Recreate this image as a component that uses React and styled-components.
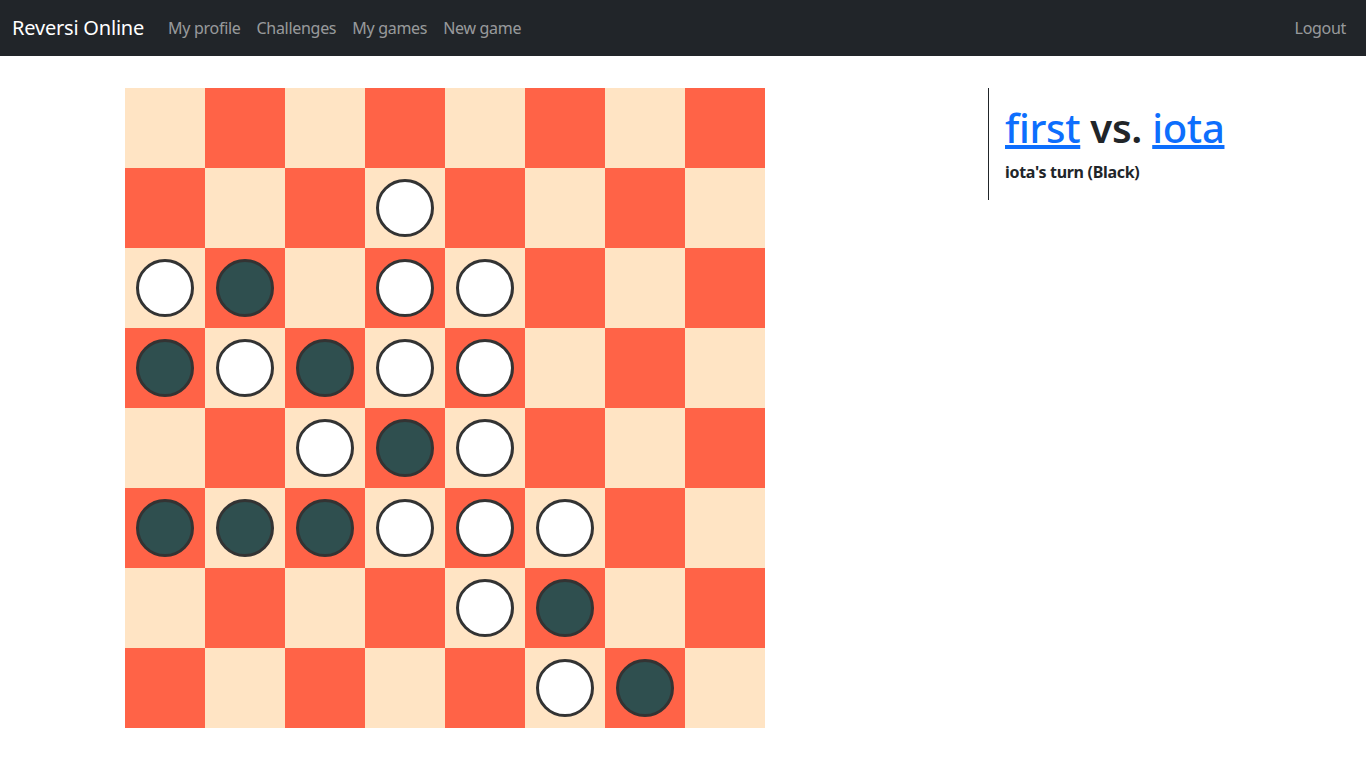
import React from "react";
import styled, { createGlobalStyle } from "styled-components";

const GlobalStyle = createGlobalStyle`
  html, body { margin: 0; padding: 0; background: #fff; }
  body {
    font-family: "Noto Sans", "Open Sans", sans-serif;
    font-size: 16px;
    line-height: 1.5;
    color: #212529;
  }
  * { box-sizing: border-box; }
`;

const Navbar = styled.nav`
  height: 56px;
  background: #212529;
  display: flex;
  align-items: center;
  padding: 0 12px;
`;

const Brand = styled.a`
  color: #fff;
  font-size: 20px;
  text-decoration: none;
  margin-right: 16px;
  letter-spacing: -0.2px;
`;

const NavList = styled.div`
  display: flex;
  align-items: center;
  flex: 1;
`;

const NavLink = styled.a`
  color: rgba(255, 255, 255, 0.55);
  text-decoration: none;
  padding: 8px;
  font-size: 16px;
  letter-spacing: -0.3px;
  margin-left: ${(p) => (p.$push ? "auto" : "0")};
`;

const Main = styled.main`
  display: flex;
  align-items: flex-start;
  padding: 32px 0 0 125px;
  gap: 223px;
`;

const Board = styled.div`
  display: grid;
  grid-template-columns: repeat(8, 80px);
  grid-template-rows: repeat(8, 80px);
`;

const Cell = styled.div`
  background: ${(p) => (p.$light ? "#ffe4c4" : "#ff6347")};
  display: flex;
  align-items: center;
  justify-content: center;
`;

const Piece = styled.div`
  width: 58px;
  height: 58px;
  border-radius: 50%;
  border: 3.5px solid #333;
  background: ${(p) => (p.$color === "b" ? "#2f4f4f" : "#fff")};
`;

const Panel = styled.aside`
  border-left: 1px solid #212529;
  padding: 16px 16px;
`;

const Title = styled.h1`
  margin: 0 0 8px;
  font-size: 40px;
  line-height: 48px;
  font-weight: 600;
  letter-spacing: -0.3px;
`;

const PlayerLink = styled.a`
  color: #0d6efd;
  text-decoration: underline;
  font-weight: 500;
`;

const Turn = styled.div`
  font-weight: 700;
  font-size: 16px;
  line-height: 24px;
  letter-spacing: -0.3px;
`;

const BOARD = [
  "........",
  "...w....",
  "wb.ww...",
  "bwbww...",
  "..wbw...",
  "bbbwww..",
  "....wb..",
  ".....wb.",
];

export default function App() {
  return (
    <>
      <GlobalStyle />
      <Navbar>
        <Brand href="#">Reversi Online</Brand>
        <NavList>
          <NavLink href="#">My profile</NavLink>
          <NavLink href="#">Challenges</NavLink>
          <NavLink href="#">My games</NavLink>
          <NavLink href="#">New game</NavLink>
          <NavLink href="#" $push>Logout</NavLink>
        </NavList>
      </Navbar>
      <Main>
        <Board>
          {BOARD.map((row, r) =>
            row.split("").map((ch, c) => (
              <Cell key={`${r}-${c}`} $light={(r + c) % 2 === 0}>
                {ch !== "." && <Piece $color={ch} />}
              </Cell>
            ))
          )}
        </Board>
        <Panel>
          <Title>
            <PlayerLink href="#">first</PlayerLink> vs.{" "}
            <PlayerLink href="#">iota</PlayerLink>
          </Title>
          <Turn>iota's turn (Black)</Turn>
        </Panel>
      </Main>
    </>
  );
}
